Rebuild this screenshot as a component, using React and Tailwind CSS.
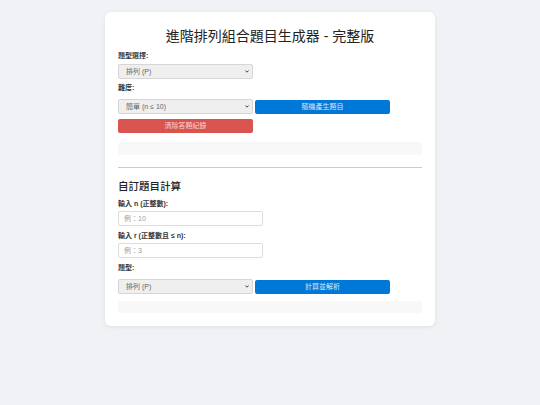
import React from 'react';

const font = { fontFamily: '"Liberation Sans", Arial, "Noto Sans CJK TC", sans-serif' };

function Label({ children, className = '' }) {
  return <div className={`text-[7px] leading-[10px] font-bold text-[#333] ${className}`}>{children}</div>;
}

function Select({ value, options }) {
  return (
    <div className="relative h-[15px] w-[135px] shrink-0">
      <select
        defaultValue={value}
        className="block h-[15px] w-full appearance-none rounded-[2px] border border-[#d6d6d6] bg-[#efefef] py-0 pl-[7px] text-[7px] leading-[13px] text-[#666]"
      >
        {options.map((o) => (
          <option key={o}>{o}</option>
        ))}
      </select>
      <svg
        className="pointer-events-none absolute right-[4px] top-[6px]"
        width="4"
        height="3"
        viewBox="0 0 4 3"
      >
        <path d="M0.4 0.5 L2 2.2 L3.6 0.5" fill="none" stroke="#333" strokeWidth="0.9" />
      </svg>
    </div>
  );
}

function Button({ children, color, className = '' }) {
  return (
    <button
      className={`block h-[14px] w-[135px] shrink-0 rounded-[2px] text-[7px] leading-[14px] ${color} ${className}`}
    >
      {children}
    </button>
  );
}

export default function App() {
  return (
    <div className="min-h-[405px] bg-[#f0f2f5] pt-[12px]" style={font}>
      <div className="mx-auto w-[330px] rounded-[6px] bg-white px-[13px] pt-[14px] pb-[13px] shadow-[0_1px_4px_rgba(0,0,0,0.08)]">
        <h1 className="text-center text-[14px] leading-[20px] text-[#222]">進階排列組合題目生成器 - 完整版</h1>

        <Label className="mt-[5px]">題型選擇:</Label>
        <div className="mt-[3px]">
          <Select value="排列 (P)" options={['排列 (P)', '組合 (C)']} />
        </div>

        <Label className="mt-[4px]">難度:</Label>
        <div className="mt-[6px] flex items-center gap-[2px]">
          <Select value="簡單 (n ≤ 10)" options={['簡單 (n ≤ 10)', '中等 (n ≤ 20)', '困難 (n ≤ 50)']} />
          <Button color="bg-[#0078d7] text-[#dbe9f7]">隨機產生題目</Button>
        </div>
        <Button color="bg-[#d9534f] text-[#f6d9d8]" className="mt-[5px]">清除答題紀錄</Button>

        <div className="mt-[9px] h-[13px] rounded-[3px] bg-[#f8f8f8]" />

        <div className="mt-[12px] border-t border-[#cccccc]" />

        <h2 className="mt-[11px] text-[10.5px] leading-[14px] font-medium text-[#222]">自訂題目計算</h2>

        <Label className="mt-[6px]">輸入 n (正整數):</Label>
        <input
          placeholder="例：10"
          className="mt-[2px] block h-[15px] w-[145px] rounded-[2px] border border-[#dddddd] bg-white px-[5px] text-[7px] placeholder:text-[#a0a0a0]"
        />

        <Label className="mt-[5px]">輸入 r (正整數且 ≤ n):</Label>
        <input
          placeholder="例：3"
          className="mt-[2px] block h-[15px] w-[145px] rounded-[2px] border border-[#dddddd] bg-white px-[5px] text-[7px] placeholder:text-[#a0a0a0]"
        />

        <Label className="mt-[5px]">題型:</Label>
        <div className="mt-[6px] flex items-center gap-[2px]">
          <Select value="排列 (P)" options={['排列 (P)', '組合 (C)']} />
          <Button color="bg-[#0078d7] text-[#dbe9f7]">計算並解析</Button>
        </div>

        <div className="mt-[7px] h-[12px] rounded-[3px] bg-[#f8f8f8]" />
      </div>
    </div>
  );
}
